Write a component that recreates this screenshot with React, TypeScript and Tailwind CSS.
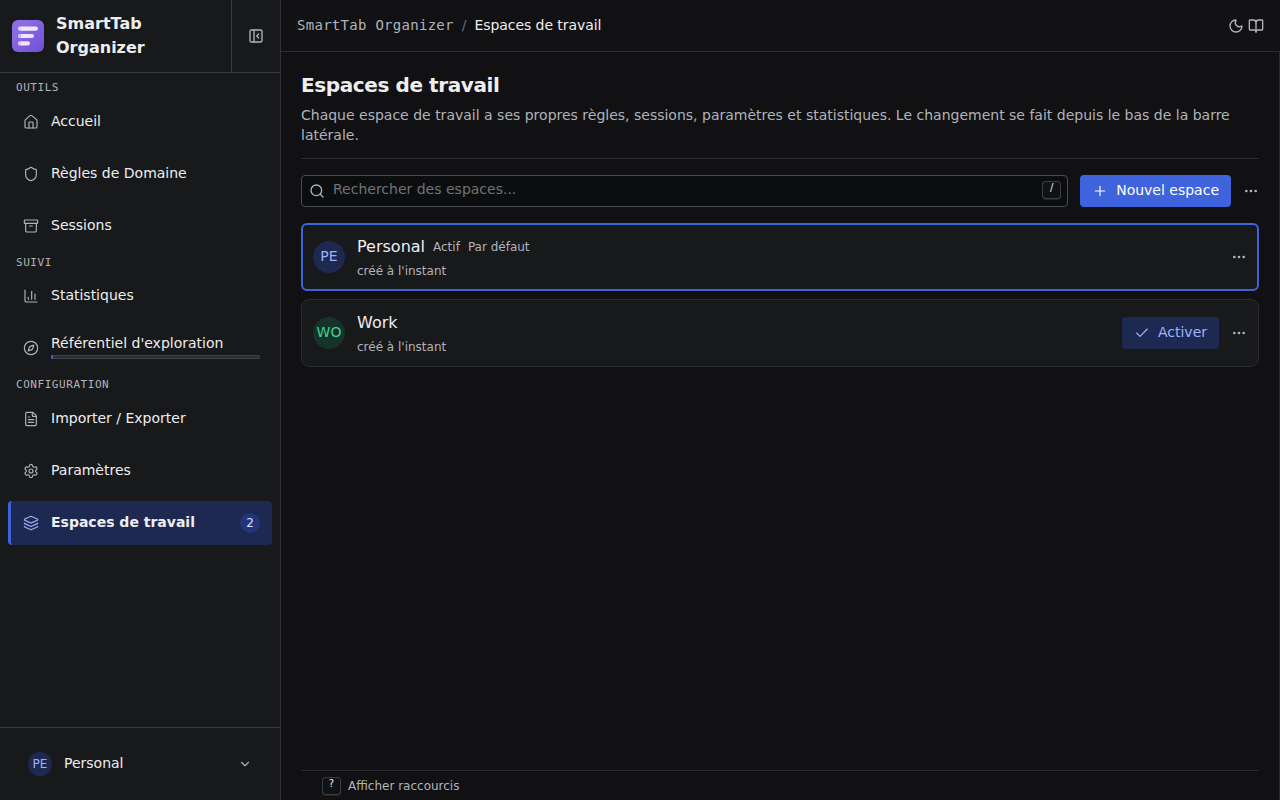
import { useState } from 'react'
import {
  Archive,
  BookOpen,
  ChartColumn,
  Check,
  ChevronDown,
  Compass,
  Ellipsis,
  FileText,
  House,
  Layers,
  Moon,
  PanelLeftClose,
  Plus,
  Search,
  Settings,
  Shield,
  type LucideIcon,
} from 'lucide-react'

type NavItem = {
  id: string
  label: string
  icon: LucideIcon
  count?: number
  progress?: number
}

const groups: { title: string; items: NavItem[] }[] = [
  {
    title: 'Outils',
    items: [
      { id: 'home', label: 'Accueil', icon: House },
      { id: 'rules', label: 'Règles de Domaine', icon: Shield },
      { id: 'sessions', label: 'Sessions', icon: Archive },
    ],
  },
  {
    title: 'Suivi',
    items: [
      { id: 'stats', label: 'Statistiques', icon: ChartColumn },
      { id: 'explore', label: "Référentiel d'exploration", icon: Compass, progress: 1 },
    ],
  },
  {
    title: 'Configuration',
    items: [
      { id: 'import', label: 'Importer / Exporter', icon: FileText },
      { id: 'settings', label: 'Paramètres', icon: Settings },
      { id: 'workspaces', label: 'Espaces de travail', icon: Layers, count: 2 },
    ],
  },
]

const workspaces = [
  { name: 'Personal', initials: 'PE', color: 'bg-[#1d2950] text-[#9eb1ff]', isDefault: true },
  { name: 'Work', initials: 'WO', color: 'bg-[#17322a] text-[#3dd68c]', isDefault: false },
]

function Logo() {
  return (
    <svg width="32" height="32" viewBox="0 0 32 32" className="shrink-0">
      <defs>
        <linearGradient id="logo" x1="0" y1="0" x2="1" y2="1">
          <stop offset="0" stopColor="#9373ea" />
          <stop offset="1" stopColor="#714fd4" />
        </linearGradient>
      </defs>
      <rect width="32" height="32" rx="6" fill="url(#logo)" />
      <rect x="6" y="6.5" width="20" height="4.2" rx="2.1" fill="#f0e7ff" />
      <rect x="6" y="13.9" width="16" height="4.2" rx="2.1" fill="#eee5ff" />
      <rect x="6" y="21.3" width="12" height="4.2" rx="2.1" fill="#eee5ff" />
      <circle cx="8" cy="8.6" r="1.4" fill="#dccbff" />
      <circle cx="8" cy="16" r="1.4" fill="#8fc4f4" />
      <circle cx="8" cy="23.4" r="1.4" fill="#f3b5d6" />
    </svg>
  )
}

function NavButton({ item, active, onClick }: { item: NavItem; active: boolean; onClick: () => void }) {
  const Icon = item.icon
  return (
    <button
      onClick={onClick}
      className={`flex h-11 w-full items-center gap-3 rounded-[4px] border-l-[3px] px-3 text-left text-sm ${
        active ? 'border-[#3e63dd] bg-[#1d2950] font-bold text-[#edeef0]' : 'border-transparent text-[#edeef0]'
      }`}
    >
      <Icon size={16} strokeWidth={1.75} className={active ? 'shrink-0 text-[#9eb1ff]' : 'shrink-0 text-[#b0b4ba]'} />
      <div className="flex-1">
        <div className={item.progress ? 'leading-5' : 'pb-0.5 leading-5'}>{item.label}</div>
        {item.progress && (
          <div className="mt-0.5 mb-[5px] h-1 overflow-hidden rounded-full bg-[#2b2d30] ring-1 ring-[#3e4145] ring-inset">
            <div className="h-full bg-[#4a68d8]" style={{ width: `${item.progress}%` }} />
          </div>
        )}
      </div>
      {item.count && (
        <span className="flex size-5 items-center justify-center rounded-full bg-[#22357a] text-xs font-normal text-[#d6e1ff]">
          {item.count}
        </span>
      )}
    </button>
  )
}

function Kbd({ children }: { children: string }) {
  return (
    <kbd className="flex h-[18px] w-[19px] items-start justify-center rounded-[4px] bg-[#111214] font-['DejaVu_Sans'] text-[10px] leading-[13px] text-[#edeef0] shadow-[inset_0_0_0_1px_#3a3e43,0_1px_0_#24272a]">
      {children}
    </kbd>
  )
}

export default function App() {
  const [page, setPage] = useState('workspaces')
  const [current, setCurrent] = useState('Personal')
  const [query, setQuery] = useState('')

  const visible = workspaces.filter((w) => w.name.toLowerCase().includes(query.toLowerCase()))

  return (
    <div className="flex h-screen overflow-hidden bg-[#111113] font-['DejaVu_Sans',sans-serif] text-[#edeef0]">
      <aside className="flex w-[281px] shrink-0 flex-col border-r border-[#303236] bg-[#18191b]">
        <div className="flex h-[73px] shrink-0 border-b border-[#3a3c40]">
          <div className="flex flex-1 items-center gap-3 pl-3">
            <Logo />
            <div className="w-32 text-base leading-6 font-bold">SmartTab Organizer</div>
          </div>
          <button className="flex w-[49px] items-center justify-center border-l border-[#3a3c40] text-[#b0b4ba]">
            <PanelLeftClose size={16} />
          </button>
        </div>

        <nav className="flex-1 px-2">
          {groups.map((group) => (
            <div key={group.title}>
              <div className="h-[26.5px] px-2 pt-[7px] font-['DejaVu_Sans_Mono',monospace] text-[11px] leading-4 tracking-[0.05em] text-[#b0b4ba] uppercase">
                {group.title}
              </div>
              <div className="space-y-2">
                {group.items.map((item) => (
                  <NavButton key={item.id} item={item} active={page === item.id} onClick={() => setPage(item.id)} />
                ))}
              </div>
            </div>
          ))}
        </nav>

        <div className="flex h-[73px] shrink-0 items-center border-t border-[#3a3c40] px-7">
          <span className="flex size-6 items-center justify-center rounded-full bg-[#1d2950] text-xs text-[#9eb1ff]">
            PE
          </span>
          <span className="ml-3 flex-1 pb-0.5 text-sm">{current}</span>
          <ChevronDown size={14} className="text-[#b0b4ba]" />
        </div>
      </aside>

      <div className="flex min-w-0 flex-1 flex-col">
        <header className="flex h-[52px] shrink-0 items-center justify-between border-b border-[#292b2e] px-4">
          <div className="flex items-center gap-2 pb-0.5 text-sm">
            <span className="font-['DejaVu_Sans_Mono',monospace] tracking-[0.02em] text-[#b0b4ba]">
              SmartTab Organizer
            </span>
            <span className="text-[#696e77]">/</span>
            <span className="tracking-[-0.005em]">Espaces de travail</span>
          </div>
          <div className="flex items-center gap-1 text-[#b0b4ba]">
            <Moon size={16} />
            <BookOpen size={16} />
          </div>
        </header>

        <main className="flex flex-1 flex-col border-r border-[#292b2e] px-5">
          <div className="border-b border-[#292b2e] pt-[19px] pb-[13px]">
            <h1 className="text-xl leading-7 font-bold tracking-[-0.02em]">Espaces de travail</h1>
            <p className="mt-1.5 text-sm leading-5 text-[#b0b4ba]">
              Chaque espace de travail a ses propres règles, sessions, paramètres et statistiques. Le changement se fait
              depuis le bas de la barre latérale.
            </p>
          </div>

          <div className="mt-4 flex h-8 items-center">
            <div className="flex h-8 flex-1 items-center gap-2 rounded-[4px] border border-[#484b50] bg-[#0c0d0f] pr-1.5 pl-[7px]">
              <Search size={16} className="text-[#b0b4ba]" />
              <input
                value={query}
                onChange={(e) => setQuery(e.target.value)}
                placeholder="Rechercher des espaces..."
                className="min-w-0 flex-1 pb-[5px] text-sm outline-none placeholder:text-[#6f7377]"
              />
              <div className="pb-0.5">
                <Kbd>/</Kbd>
              </div>
            </div>
            <button className="ml-3 flex h-8 items-center gap-2 rounded-[4px] bg-[#3e63dd] px-3 text-sm text-white">
              <Plus size={16} strokeWidth={1.75} />
              <span className="pb-0.5">Nouvel espace</span>
            </button>
            <button className="ml-3 text-[#b0b4ba]">
              <Ellipsis size={16} />
            </button>
          </div>

          <div className="mt-4 flex flex-col gap-2">
            {visible.map((w) => {
              const active = w.name === current
              return (
                <div
                  key={w.name}
                  className={`flex h-17 items-center bg-[#18191b] ${
                    active ? 'rounded-[6px] border-2 border-[#3e63dd] px-2.5' : 'rounded-lg border border-[#2a2c30] px-[11px]'
                  }`}
                >
                  <span className={`flex size-8 items-center justify-center rounded-full pb-0.5 text-sm ${w.color}`}>
                    {w.initials}
                  </span>
                  <div className="ml-3 flex-1">
                    <div className="flex items-center gap-2 leading-6">
                      <span>{w.name}</span>
                      {active && <span className="text-xs text-[#b0b4ba]">Actif</span>}
                      {w.isDefault && <span className="text-xs text-[#b0b4ba]">Par défaut</span>}
                    </div>
                    <div className="mt-1 text-xs leading-4 text-[#b0b4ba]">créé à l'instant</div>
                  </div>
                  {!active && (
                    <button
                      onClick={() => setCurrent(w.name)}
                      className="mr-3 flex h-8 items-center gap-2 rounded-[4px] bg-[#1d2950] px-3 text-sm text-[#9eb1ff]"
                    >
                      <Check size={16} strokeWidth={1.75} />
                      <span className="pb-0.5">Activer</span>
                    </button>
                  )}
                  <button className="text-[#b0b4ba]">
                    <Ellipsis size={16} />
                  </button>
                </div>
              )
            })}
          </div>

          <footer className="mt-auto flex h-[30px] items-center gap-[7px] border-t border-[#292b2e] px-[21px] text-xs text-[#b0b4ba]">
            <Kbd>?</Kbd>
            Afficher raccourcis
          </footer>
        </main>
      </div>
    </div>
  )
}
